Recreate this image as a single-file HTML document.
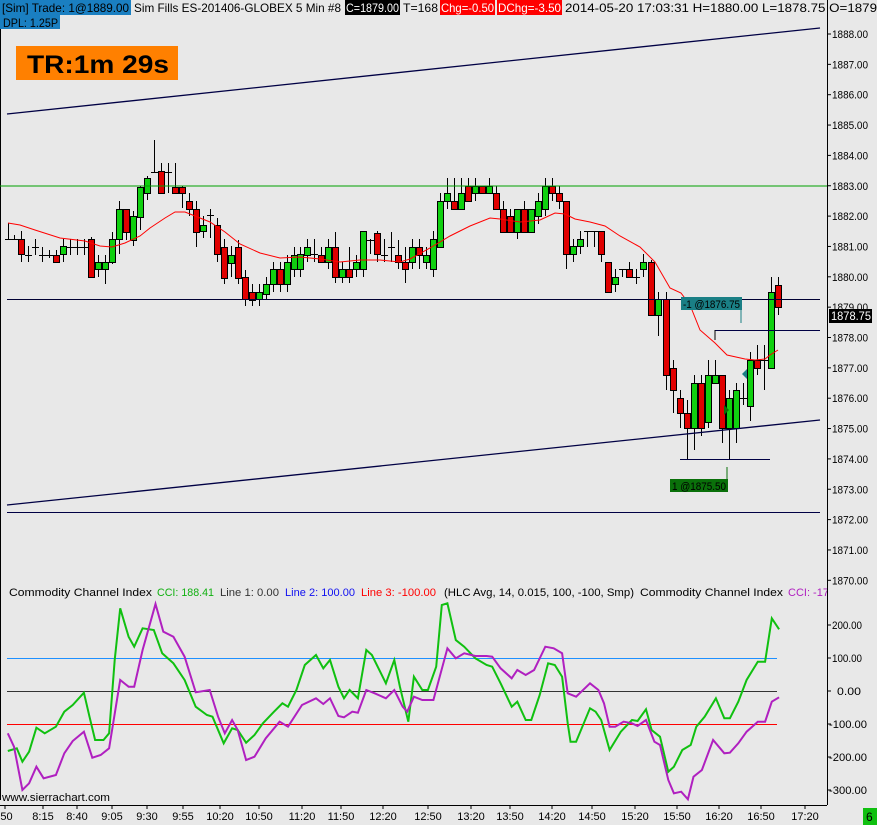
<!DOCTYPE html>
<html><head><meta charset="utf-8">
<style>
html,body{margin:0;padding:0;background:#e8e8e8;}
body{width:877px;height:825px;overflow:hidden;position:relative;font-family:"Liberation Sans",sans-serif;}
svg{position:absolute;left:0;top:0;}
text{font-family:"Liberation Sans",sans-serif;}
</style></head>
<body>
<svg id="s" width="877" height="825" viewBox="0 0 877 825" xmlns="http://www.w3.org/2000/svg">
<rect x="0" y="0" width="877" height="825" fill="#e8e8e8"/>
<line x1="0.5" y1="0" x2="0.5" y2="800" stroke="#000" stroke-width="1"/>
<line x1="827.5" y1="0" x2="827.5" y2="805" stroke="#000" stroke-width="1"/>
<g id="candles"></g>
<polyline id="ema" fill="none" stroke="#f00" stroke-width="1"/>
<line x1="0" y1="186" x2="827" y2="186" stroke="#00a000" stroke-width="1"/>
<line x1="7" y1="299.5" x2="820" y2="299.5" stroke="#000033" stroke-width="1"/>
<line x1="7" y1="512.5" x2="820" y2="512.5" stroke="#000044" stroke-width="1"/>
<line x1="7" y1="114" x2="820" y2="28" stroke="#000044" stroke-width="1.3"/>
<line x1="7" y1="505" x2="820" y2="420" stroke="#000044" stroke-width="1.3"/>
<line x1="715" y1="330.5" x2="820" y2="330.5" stroke="#000044" stroke-width="1"/>
<line x1="715" y1="330" x2="715" y2="340" stroke="#000" stroke-width="1"/>
<line x1="680" y1="459.5" x2="770" y2="459.5" stroke="#000044" stroke-width="1"/>
<rect x="0" y="0" width="131" height="15" fill="#1a7fc1"/>
<rect x="0" y="15" width="60" height="14" fill="#1a7fc1"/>
<rect x="345" y="0" width="55" height="15" fill="#000"/>
<rect x="440" y="0" width="55" height="15" fill="#f00"/>
<rect x="497" y="0" width="65" height="15" fill="#f00"/>
<g font-size="12" fill="#000">
<text x="2" y="12" textLength="127" lengthAdjust="spacingAndGlyphs">[Sim]  Trade: 1@1889.00</text>
<text x="134" y="12" textLength="207" lengthAdjust="spacingAndGlyphs">Sim Fills  ES-201406-GLOBEX  5 Min   #8</text>
<text x="346" y="12" fill="#fff" textLength="53" lengthAdjust="spacingAndGlyphs">C=1879.00</text>
<text x="403" y="12" textLength="35" lengthAdjust="spacingAndGlyphs">T=168</text>
<text x="441" y="12" fill="#fff" textLength="53" lengthAdjust="spacingAndGlyphs">Chg=-0.50</text>
<text x="498" y="12" fill="#fff" textLength="63" lengthAdjust="spacingAndGlyphs">DChg=-3.50</text>
<text x="565" y="12" textLength="312" lengthAdjust="spacingAndGlyphs">2014-05-20 17:03:31 H=1880.00 L=1878.75 O=1879</text>
<text x="3" y="27" textLength="55" lengthAdjust="spacingAndGlyphs">DPL: 1.25P</text>
</g>
<rect x="16" y="46" width="162" height="34" fill="#ff8000"/>
<text x="27" y="73" font-size="25" font-weight="bold" fill="#000" textLength="142" lengthAdjust="spacingAndGlyphs">TR:1m 29s</text>
<line x1="741" y1="309" x2="741" y2="323" stroke="#1a7f85"/>
<rect x="681" y="297" width="61" height="13" fill="#1a7f85"/>
<text x="683" y="308" font-size="11" fill="#000" textLength="57" lengthAdjust="spacingAndGlyphs">-1 @1876.75</text>
<line x1="727" y1="467" x2="727" y2="480" stroke="#0a700a"/>
<rect x="670" y="479" width="58" height="13" fill="#0a700a"/>
<text x="672" y="490" font-size="11" fill="#000" textLength="54" lengthAdjust="spacingAndGlyphs">1 @1875.50</text>
<polygon points="742,374 747,369 747,379" fill="#1a7f85"/>
<polygon points="729,410 724,405 724,415" fill="#0a700a"/>
<line x1="7" y1="658.5" x2="777" y2="658.5" stroke="#1e90ff" stroke-width="1"/>
<line x1="7" y1="691.5" x2="777" y2="691.5" stroke="#333" stroke-width="1"/>
<line x1="7" y1="724.5" x2="777" y2="724.5" stroke="#f00" stroke-width="1"/>
<polyline id="cg" fill="none" stroke="#10c010" stroke-width="2"/>
<polyline id="cm" fill="none" stroke="#b020c0" stroke-width="2"/>
<g font-size="11">
<text x="9" y="596" fill="#000" textLength="143" lengthAdjust="spacingAndGlyphs">Commodity Channel Index</text>
<text x="157" y="596" fill="#10b010" textLength="57" lengthAdjust="spacingAndGlyphs">CCI: 188.41</text>
<text x="220" y="596" fill="#333" textLength="59" lengthAdjust="spacingAndGlyphs">Line 1: 0.00</text>
<text x="285" y="596" fill="#1010f0" textLength="70" lengthAdjust="spacingAndGlyphs">Line 2: 100.00</text>
<text x="361" y="596" fill="#f00" textLength="75" lengthAdjust="spacingAndGlyphs">Line 3: -100.00</text>
<text x="444" y="596" fill="#000" textLength="190" lengthAdjust="spacingAndGlyphs">(HLC Avg, 14, 0.015, 100, -100, Smp)</text>
<text x="640" y="596" fill="#000" textLength="143" lengthAdjust="spacingAndGlyphs">Commodity Channel Index</text>
<text x="788" y="596" fill="#b020c0">CCI: -17</text>
</g>
<rect x="828" y="16" width="49" height="809" fill="#e8e8e8"/>
<line x1="827.5" y1="16" x2="827.5" y2="805" stroke="#000" stroke-width="1"/>
<g id="axis" font-size="11" fill="#000"></g>
<rect x="829" y="309" width="43" height="14" fill="#000"/>
<text x="831" y="320" font-size="11.5" fill="#fff" textLength="40" lengthAdjust="spacingAndGlyphs">1878.75</text>
<text x="2" y="801" font-size="11" fill="#000" textLength="108" lengthAdjust="spacingAndGlyphs">www.sierrachart.com</text>
<g id="times" font-size="11" fill="#000"></g>
<rect x="863" y="808" width="14" height="17" fill="#10c010"/>
<text x="866" y="821" font-size="12" fill="#000">6</text>
</svg>
<script>
(function(){
var NS="http://www.w3.org/2000/svg";
function el(p,n,a,t){var e=document.createElementNS(NS,n);for(var k in a)e.setAttribute(k,a[k]);if(t!=null)e.textContent=t;p.appendChild(e);return e;}
var C=[
[8,239,239,'t',223,239],[14,239,239,'t',235,239],[21,239,254,'r',231,262],[28,255,255,'t',246,262],[35,247,247,'t',239,255],[42,255,255,'t',247,262],[49,255,255,'t',250,258],[56,255,262,'r',250,262],[63,246,254,'g',239,262],[70,247,247,'t',239,255],[77,247,247,'t',239,255],[84,247,247,'t',239,255],[91,239,277,'r',237,277],[98,262,269,'g',255,277],[105,262,269,'g',255,284],[112,239,262,'g',232,264],
[119,209,239,'g',201,254],[126,209,232,'r',209,240],[133,216,240,'g',211,246],[140,187,217,'g',186,230],[147,178,193,'g',176,200],[154,172,172,'t',140,172],[161,171,193,'r',163,193],[168,172,172,'t',163,193],[175,187,193,'r',163,193],[182,187,193,'r',186,208],[189,201,209,'r',193,216],[196,209,232,'r',201,247],[203,225,231,'g',216,238],[210,215,215,'t',209,238],[217,225,254,'r',218,262],[224,247,278,'r',239,284],[231,255,263,'g',246,277],[238,247,278,'r',240,284],[245,277,299,'r',270,306],[252,292,300,'r',284,306],[259,292,299,'g',284,306],[266,284,294,'g',277,300],[273,269,284,'g',262,292],[280,269,284,'r',262,292],[287,262,284,'g',255,292],[294,255,269,'g',247,277],
[300,254,269,'g',247,277],[307,247,255,'g',239,262],[314,254,254,'t',239,262],[321,255,262,'r',247,262],[328,247,262,'g',239,269],[335,247,277,'r',232,283],[342,269,277,'g',262,283],[349,269,277,'r',247,283],[356,262,269,'g',255,277],[363,231,269,'g',231,277],[370,240,240,'t',239,254],[377,233,254,'r',231,262],[384,255,255,'t',239,262],[391,247,247,'t',232,262],[398,255,262,'r',240,269],[405,262,269,'r',247,283],[412,247,262,'g',239,269],[419,247,255,'r',239,269],[426,255,262,'g',247,269],[433,239,269,'g',231,277],[440,201,247,'g',193,247],[447,193,201,'g',178,209],[454,201,209,'r',178,209],[461,193,209,'g',178,209],[468,186,201,'r',178,201],[475,186,193,'g',178,201],[482,186,193,'r',186,193],[489,186,193,'g',178,193],[496,193,209,'r',186,209],[503,209,232,'r',201,232],[510,216,232,'r',209,232],[517,209,232,'g',209,239],[524,209,232,'r',201,232],[531,209,232,'g',209,232],[538,201,216,'g',193,224],[545,186,209,'g',178,216],[552,186,193,'r',178,201],[559,193,201,'r',186,209],[566,201,254,'r',201,269],[573,246,254,'g',239,262],[580,239,246,'g',231,254],[587,231,231,'t',231,247],[594,231,231,'t',231,247],[601,231,254,'r',231,262],[608,262,292,'r',262,292],[615,277,284,'g',269,292],[622,269,269,'t',269,277],[629,269,277,'r',262,277],[636,277,277,'t',269,284],[643,262,269,'g',254,277],
[651,262,315,'r',260,315],[658,299,315,'g',292,336],[666,299,375,'r',292,390],[673,368,390,'r',360,413],[680,398,413,'r',390,428],[687,413,428,'r',400,459],[694,383,428,'g',375,450],[701,383,428,'r',375,436],[708,375,422,'g',360,428],[715,375,383,'g',360,383],[722,375,428,'r',375,443],[729,398,428,'g',390,459],[736,390,428,'g',383,443],[743,398,398,'t',383,405],[750,360,406,'g',352,421],[757,360,368,'r',345,375],[764,360,360,'t',345,390],[771,292,368,'g',277,368],[778,285,307,'r',277,315]
];
var g=document.getElementById('candles');
C.forEach(function(c){
 var x=c[0];
 el(g,'line',{x1:x+0.5,y1:c[4],x2:x+0.5,y2:c[5],stroke:'#000','stroke-width':1});
 if(c[3]=='t'){el(g,'line',{x1:x-3,y1:c[1]+0.5,x2:x+4,y2:c[1]+0.5,stroke:'#000','stroke-width':1});}
 else{var h=Math.max(c[2]-c[1],2);el(g,'rect',{x:x-2.5,y:c[1]+0.5,width:6,height:h,fill:c[3]=='g'?'#10d010':'#e00000',stroke:'#000','stroke-width':1});}
});
var ema=[[8,223],[20,225],[35,230],[60,238],[85,241],[100,246],[112,247],[125,243],[140,236],[150,228],[165,218],[175,212],[185,212],[195,216],[210,222],[225,232],[240,244],[260,253],[280,258],[300,257],[320,259],[340,262],[360,260],[380,260],[400,262],[410,259],[430,248],[450,236],[470,226],[490,218],[500,219],[520,222],[540,220],[555,213],[565,214],[575,219],[590,222],[605,226],[620,236],[640,247],[655,262],[670,288],[681,293],[690,305],[700,330],[715,343],[727,355],[745,359],[755,360],[765,359],[770,355],[778,350]];
document.getElementById('ema').setAttribute('points',ema.map(function(p){return p.join(',')}).join(' '));
function conv(a){return a.map(function(p){return (p[0]/1.788).toFixed(1)+','+(580+p[1]/3).toFixed(1)}).join(' ');}
var G=[[14,513],[30,505],[40,545],[52,515],[65,443],[80,460],[100,440],[115,395],[130,375],[150,338],[160,410],[170,480],[185,480],[195,460],[205,240],[215,85],[230,170],[240,200],[255,145],[275,150],[290,220],[310,250],[330,300],[350,380],[370,405],[380,410],[400,490],[415,445],[425,450],[440,488],[455,465],[470,430],[490,395],[505,370],[515,380],[530,330],[545,255],[565,225],[578,265],[590,240],[605,320],[615,355],[625,330],[640,355],[655,210],[665,225],[690,310],[705,240],[715,320],[730,425],[740,290],[755,330],[765,330],[780,260],[790,75],[800,70],[815,180],[830,200],[850,235],[870,255],[880,260],[895,310],[915,380],[925,365],[940,420],[950,420],[965,345],[980,250],[992,255],[1005,290],[1015,430],[1020,485],[1030,485],[1055,385],[1065,395],[1075,420],[1090,510],[1110,455],[1130,420],[1140,423],[1155,388],[1165,450],[1180,470],[1195,575],[1205,560],[1220,510],[1235,495],[1245,440],[1260,410],[1280,355],[1295,415],[1305,415],[1320,365],[1335,300],[1355,245],[1368,245],[1380,115],[1393,148]];
var M=[[14,460],[25,500],[40,630],[52,610],[65,560],[78,595],[100,585],[115,520],[130,483],[150,455],[165,533],[180,525],[195,505],[215,300],[230,320],[240,320],[255,210],[278,72],[292,155],[310,170],[330,230],[350,337],[375,330],[390,410],[402,460],[415,420],[425,450],[440,540],[455,530],[475,475],[500,425],[515,440],[540,375],[565,355],[578,372],[590,355],[605,408],[615,412],[630,395],[640,398],[655,330],[670,340],[690,355],[705,330],[720,380],[728,395],[740,350],[755,360],[775,360],[800,205],[815,235],[830,220],[850,228],[870,228],[880,230],[895,265],[915,295],[925,270],[940,285],[955,270],[975,200],[990,205],[1005,220],[1015,340],[1030,350],[1055,310],[1070,330],[1080,370],[1090,440],[1100,440],[1115,425],[1130,430],[1140,438],[1155,420],[1170,485],[1180,495],[1195,600],[1205,640],[1218,635],[1230,658],[1240,590],[1255,570],[1275,480],[1295,520],[1305,518],[1320,490],[1335,455],[1355,425],[1368,425],[1380,365],[1393,352]];
document.getElementById('cg').setAttribute('points',conv(G));
document.getElementById('cm').setAttribute('points',conv(M));
var ax=document.getElementById('axis');
for(var p=1888;p>=1870;p--){var y=34+(1888-p)*30.35;
 el(ax,'line',{x1:827,y1:y,x2:831,y2:y,stroke:'#000'});
 el(ax,'text',{x:832,y:y+4,textLength:36,lengthAdjust:'spacingAndGlyphs'},p+'.00');
}
[[200,625],[100,658],[0,691],[-100,724],[-200,757],[-300,790]].forEach(function(v){
 el(ax,'line',{x1:827,y1:v[1],x2:831,y2:v[1],stroke:'#000'});
 var s=v[0].toFixed(2);var w=v[0]<0?38:(v[0]==0?24:30);
 el(ax,'text',{x:v[0]<0?829:(v[0]==0?837:832),y:v[1]+4,textLength:w,lengthAdjust:'spacingAndGlyphs'},s);
});
var T=[[":50",5],["8:15",43],["8:40",77],["9:05",112],["9:30",147],["9:55",183],["10:20",220],["10:50",259],["11:20",302],["11:50",341],["12:20",383],["12:50",428],["13:20",471],["13:50",510],["14:20",552],["14:50",592],["15:20",635],["15:50",677],["16:20",719],["16:50",761],["17:20",805]];
var tg=document.getElementById('times');
el(tg,'line',{x1:0,y1:805.5,x2:827,y2:805.5,stroke:'#000'});
T.forEach(function(t){el(tg,'line',{x1:t[1],y1:805,x2:t[1],y2:809,stroke:'#000'});el(tg,'text',{x:t[1],y:820,'text-anchor':'middle'},t[0]);});
})();
</script>
</body></html>
